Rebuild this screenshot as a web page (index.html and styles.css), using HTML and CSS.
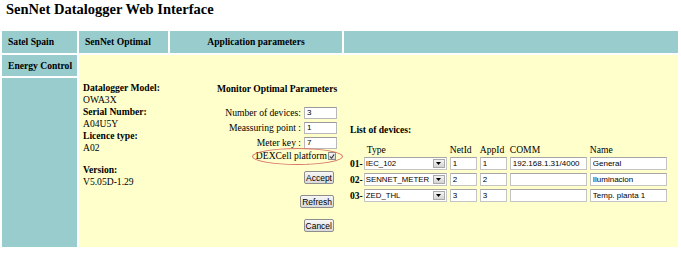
FILE: index.html
```html
<!DOCTYPE html>
<html lang="en">
    <head>
        <meta charset="UTF-8">
        <title>SenNet Datalogger Web Interface</title>
        <link rel="stylesheet" href="styles.css">
    </head>
    <body spellcheck="false">
        <h1 class="title">SenNet Datalogger Web Interface</h1>

        <div class="frame">
            <div class="cell head">Satel Spain</div>
            <div class="cell head">SenNet Optimal</div>
            <div class="cell head center">Application parameters</div>
            <div class="cell head"></div>
            <div class="cell side">Energy Control</div>

            <div class="main">
                <div class="info">
                    <b>Datalogger Model:</b><br>
                    OWA3X<br>
                    <b>Serial Number:</b><br>
                    A04U5Y<br>
                    <b>Licence type:</b><br>
                    A02<br>
                    <span class="gap"></span>
                    <b>Version:</b><br>
                    V5.05D-1.29
                </div>

                <form class="params">
                    <h3>Monitor Optimal Parameters</h3>
                    <label class="field">Number of devices: <input type="text" value="3"></label>
                    <label class="field">Meassuring point : <input type="text" value="1"></label>
                    <label class="field">Meter key : <input type="text" value="7"></label>
                    <label class="field dex">DEXCell platform
                        <span class="check">
                            <svg width="7" height="7" viewBox="0 0 7 7"><polyline points="1,3.5 3,5.5 6,1" fill="none" stroke="#333" stroke-width="1.2"/></svg>
                        </span>
                    </label>
                    <span class="mark"></span>
                    <div class="buttons">
                        <button type="button">Accept</button>
                        <button type="button">Refresh</button>
                        <button type="button">Cancel</button>
                    </div>
                </form>

                <div class="devices">
                    <h4>List of devices:</h4>
                    <table class="list">
                        <tr>
                            <th></th>
                            <th class="type">Type</th>
                            <th>NetId</th>
                            <th>AppId</th>
                            <th>COMM</th>
                            <th>Name</th>
                        </tr>
                        <tr>
                            <td class="num">01-</td>
                            <td><span class="combo"><select><option>IEC_102</option></select><span class="drop"><svg width="5" height="3" viewBox="0 0 5 3"><polygon points="0,0 5,0 2.5,3" fill="#000"/></svg></span></span></td>
                            <td><input class="small" type="text" value="1"></td>
                            <td><input class="small" type="text" value="1"></td>
                            <td><input class="wide" type="text" value="192.168.1.31/4000"></td>
                            <td><input class="wide" type="text" value="General"></td>
                        </tr>
                        <tr>
                            <td class="num">02-</td>
                            <td><span class="combo"><select><option>SENNET_METER</option></select><span class="drop"><svg width="5" height="3" viewBox="0 0 5 3"><polygon points="0,0 5,0 2.5,3" fill="#000"/></svg></span></span></td>
                            <td><input class="small" type="text" value="2"></td>
                            <td><input class="small" type="text" value="2"></td>
                            <td><input class="wide" type="text" value=""></td>
                            <td><input class="wide" type="text" value="Iluminacion"></td>
                        </tr>
                        <tr>
                            <td class="num">03-</td>
                            <td><span class="combo"><select><option>ZED_THL</option></select><span class="drop"><svg width="5" height="3" viewBox="0 0 5 3"><polygon points="0,0 5,0 2.5,3" fill="#000"/></svg></span></span></td>
                            <td><input class="small" type="text" value="3"></td>
                            <td><input class="small" type="text" value="3"></td>
                            <td><input class="wide" type="text" value=""></td>
                            <td><input class="wide" type="text" value="Temp. planta 1"></td>
                        </tr>
                    </table>
                </div>
            </div>

            <div class="cell side"></div>
        </div>
    </body>
</html>
```

FILE: styles.css
```css
body {
    margin: 0;
    padding: 0 3px 0 2px;
    font-family: "Liberation Serif", "Times New Roman", serif;
    font-size: 9.6px;
    line-height: 12px;
    color: #000;
    background: #fff;
}
.title {
    font-size: 14.5px;
    line-height: 17px;
    margin: 0;
    padding: 1px 0 0 4px;
}
.frame {
    display: grid;
    grid-template-columns: 75px 89px 172px 1fr;
    grid-template-rows: 22px 21px 169px;
    gap: 2px;
    margin-top: 13px;
}
.cell {
    background: #99cccc;
    font-weight: bold;
    display: flex;
    align-items: center;
    padding-left: 6px;
    white-space: nowrap;
}
.head.center {
    justify-content: center;
    padding-left: 0;
}
.main {
    grid-column: 2 / 5;
    grid-row: 2 / 4;
    background: #ffffcc;
    display: flex;
    padding: 27px 0 0 4px;
}
.info {
    width: 130px;
    flex: none;
}
.info .gap {
    display: block;
    height: 10px;
}

/* monitor parameters */
.params {
    position: relative;
    width: 127px;
    flex: none;
    margin: 0;
    padding-right: 3px;
    box-sizing: border-box;
}
.params h3 {
    font-size: 9.6px;
    line-height: 12px;
    margin: 1px -4px 10px 0;
    text-align: center;
    white-space: nowrap;
}
.field {
    display: flex;
    justify-content: flex-end;
    align-items: center;
    gap: 3px;
    height: 15px;
    white-space: nowrap;
}
.field input {
    width: 33px;
    height: 12px;
    box-sizing: border-box;
    border: 1px solid #b8b8b8;
    border-top-color: #9a9a9a;
    padding: 0 2px;
    font: 8px "Liberation Sans", Arial, sans-serif;
    color: #000;
    background: #fff;
}
.field.dex {
    height: 12px;
    gap: 1px;
    padding-right: 1px;
}
.check {
    width: 8px;
    height: 8px;
    border: 1px solid #8c8c8c;
    background: linear-gradient(#f4f4f4, #d8d8d8);
    box-sizing: border-box;
    display: flex;
    align-items: center;
    justify-content: center;
}
.mark {
    position: absolute;
    left: 39px;
    top: 66px;
    width: 91px;
    height: 17px;
    border: 1px solid #d8746a;
    border-radius: 50%;
    box-sizing: border-box;
}
.buttons {
    display: flex;
    flex-direction: column;
    align-items: flex-end;
    gap: 11px;
    margin-top: 9px;
    padding-right: 3px;
}
.buttons button {
    font: 8.5px "Liberation Sans", Arial, sans-serif;
    height: 13px;
    padding: 0 1px;
    border: 1px solid #8e8e8e;
    border-radius: 2px;
    background: linear-gradient(#f7f7f7, #dadada);
    color: #000;
}

/* device list */
.devices {
    margin-left: 10px;
    padding-top: 42px;
}
.devices h4 {
    font-size: 9.6px;
    line-height: 12px;
    margin: 0 0 8px;
}
.list {
    border-collapse: collapse;
}
.list th {
    font-weight: normal;
    text-align: left;
    padding: 0 3px 0 0;
    line-height: 12px;
}
.list th.type {
    padding-left: 3px;
}
.list td {
    padding: 1px 3px 2px 0;
}
.list td.num {
    font-weight: bold;
    padding-right: 1px;
}
.list input {
    height: 13px;
    box-sizing: border-box;
    border: 1px solid #c4c4c4;
    border-top-color: #a6a6a6;
    padding: 0 2px;
    font: 8px "Liberation Sans", Arial, sans-serif;
    color: #000;
    background: #fff;
    display: block;
}
.list input.small {
    width: 27px;
}
.list input.wide {
    width: 77px;
}
.combo {
    display: flex;
    width: 83px;
    height: 13px;
    box-sizing: border-box;
    border: 1px solid #c4c4c4;
    border-top-color: #a6a6a6;
    background: #fff;
}
.combo select {
    appearance: none;
    flex: 1;
    min-width: 0;
    border: 0;
    padding: 0 1px;
    margin: 0;
    height: 11px;
    font: 7.8px "Liberation Sans", Arial, sans-serif;
    background: transparent;
    color: #000;
}
.drop {
    width: 10px;
    margin: 1px;
    border: 1px solid #a9a9a9;
    background: linear-gradient(#f4f4f4, #d4d4d4);
    display: flex;
    align-items: center;
    justify-content: center;
}
```
